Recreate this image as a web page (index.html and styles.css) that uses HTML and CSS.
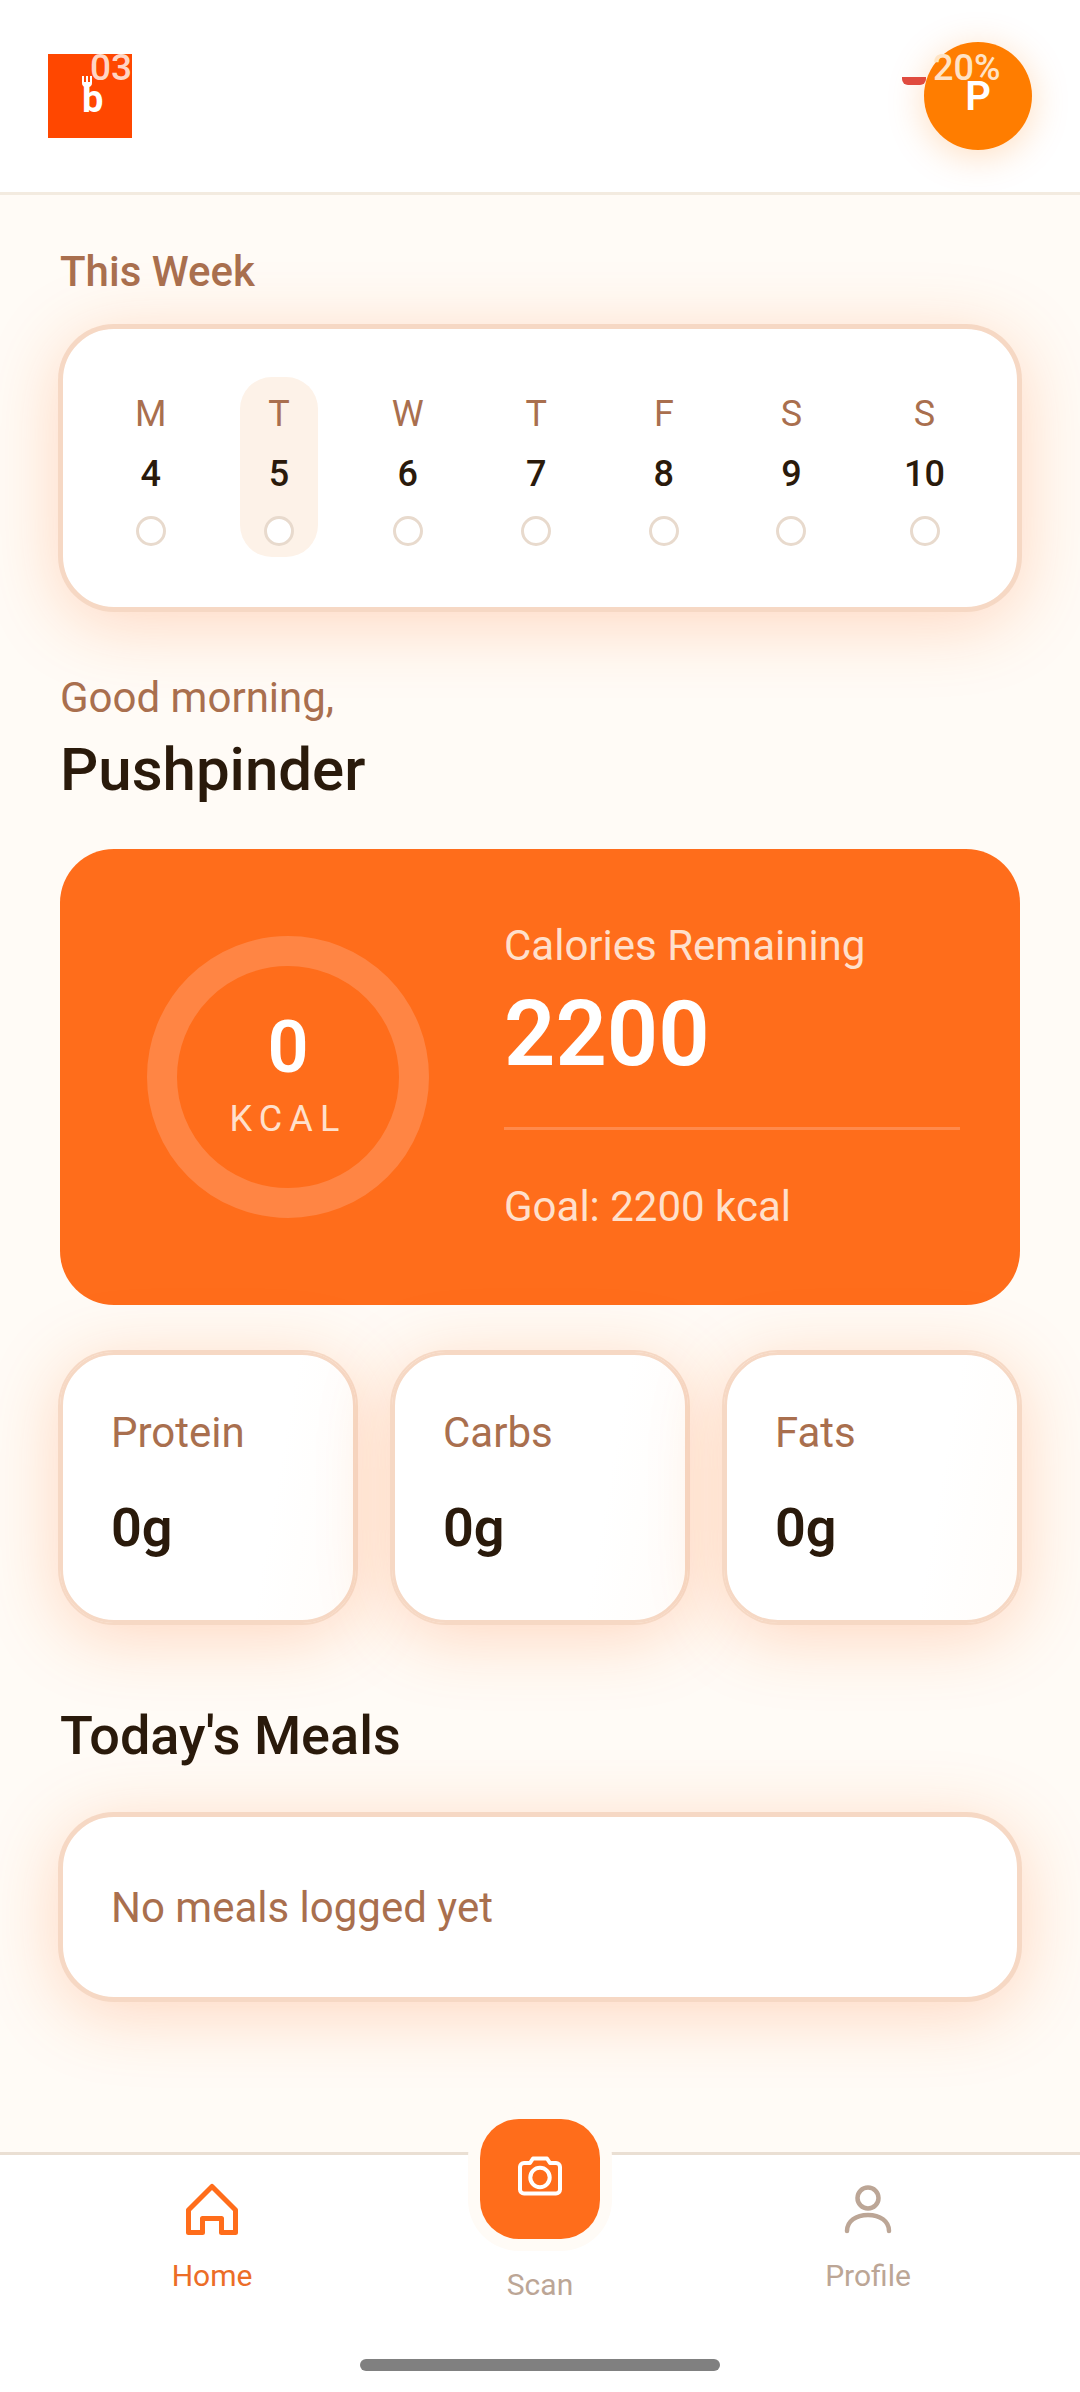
FILE: index.html
```html
<!DOCTYPE html>
<html>
<head>
  <title>Home</title>
  <link rel="stylesheet" href="styles.css">
</head>
<body>
  <header class="top-bar">
    <div class="logo">
      <span class="logo-letter">b</span>
      <svg class="logo-fork" viewBox="0 0 10 16"><path d="M0 0h2v6h2V0h2v6h2V0h2v7q0 3-3 4v5H3v-5q-3-1-3-4z" fill="#fff"/></svg>
      <span class="logo-count">03</span>
    </div>
    <div class="avatar-wrap">
      <span class="sale-dash"></span>
      <div class="avatar">P</div>
      <span class="sale-text">20%</span>
    </div>
  </header>

  <main class="content">
    <h2 class="week-title">This Week</h2>
    <section class="card week-card">
      <div class="day"><span class="day-name">M</span><span class="day-num">4</span><span class="day-dot"></span></div>
      <div class="day today"><span class="day-name">T</span><span class="day-num">5</span><span class="day-dot"></span></div>
      <div class="day"><span class="day-name">W</span><span class="day-num">6</span><span class="day-dot"></span></div>
      <div class="day"><span class="day-name">T</span><span class="day-num">7</span><span class="day-dot"></span></div>
      <div class="day"><span class="day-name">F</span><span class="day-num">8</span><span class="day-dot"></span></div>
      <div class="day"><span class="day-name">S</span><span class="day-num">9</span><span class="day-dot"></span></div>
      <div class="day"><span class="day-name">S</span><span class="day-num">10</span><span class="day-dot"></span></div>
    </section>

    <p class="greeting">Good morning,</p>
    <h1 class="user-name">Pushpinder</h1>

    <section class="calorie-card">
      <div class="ring-col">
        <div class="ring">
          <span class="ring-value">0</span>
          <span class="ring-unit">KCAL</span>
        </div>
      </div>
      <div class="calorie-info">
        <span class="calorie-label">Calories Remaining</span>
        <span class="calorie-value">2200</span>
        <div class="calorie-line"></div>
        <span class="calorie-goal">Goal: 2200 kcal</span>
      </div>
    </section>

    <section class="macros">
      <div class="card macro"><span class="macro-label">Protein</span><span class="macro-value">0g</span></div>
      <div class="card macro"><span class="macro-label">Carbs</span><span class="macro-value">0g</span></div>
      <div class="card macro"><span class="macro-label">Fats</span><span class="macro-value">0g</span></div>
    </section>

    <h2 class="meals-title">Today's Meals</h2>
    <section class="card meals-card">No meals logged yet</section>
  </main>

  <nav class="bottom-nav">
    <div class="nav-item active">
      <svg class="nav-icon" viewBox="0 0 60 60" fill="none" stroke="#ff6d1b" stroke-width="5" stroke-linejoin="round"><path d="M30 7.500 6.500 31v22.500h14v-14h19v14h14V31z"/></svg>
      <span>Home</span>
    </div>
    <div class="nav-item scan">
      <div class="scan-btn">
        <svg class="scan-icon" viewBox="0 0 48 48" fill="none" stroke="#fff" stroke-width="4" stroke-linejoin="round"><path d="M14 11l3-4.500h14l3 4.500h6a4 4 0 0 1 4 4v22.500a4 4 0 0 1-4 4H8a4 4 0 0 1-4-4V15a4 4 0 0 1 4-4z"/><circle cx="24" cy="25.500" r="9.700"/></svg>
      </div>
      <span>Scan</span>
    </div>
    <div class="nav-item">
      <svg class="nav-icon" viewBox="0 0 60 60" fill="none" stroke="#bca696" stroke-width="4.500" stroke-linecap="round"><circle cx="30" cy="19" r="10.500"/><path d="M9 52c0-10 9-16 21-16s21 6 21 16"/></svg>
      <span>Profile</span>
    </div>
    <div class="home-bar"></div>
  </nav>
</body>
</html>
```

FILE: styles.css
```css
* {
  box-sizing: border-box;
}
body {
  display: flex;
  flex-direction: column;
  width: 1080px;
  height: 2392px;
  margin: 0;
  overflow: hidden;
  background-color: #fffbf6;
  color: #2a1a0b;
  font-family: Roboto, "Noto Sans", sans-serif;
}
h1, h2, p {
  margin: 0;
}

/* top bar */
.top-bar {
  display: flex;
  justify-content: space-between;
  align-items: center;
  height: 195px;
  padding: 0 48px;
  background-color: #fff;
  border-bottom: 3px solid #f3ebe0;
  flex-shrink: 0;
}
.logo {
  position: relative;
  width: 84px;
  height: 84px;
  background-color: #ff4700;
}
.logo-fork {
  position: absolute;
  left: 34px;
  top: 22px;
  width: 10px;
  height: 16px;
}
.logo-letter {
  position: absolute;
  left: 34px;
  top: 26px;
  color: #fff;
  font-size: 38px;
  font-weight: 700;
  line-height: 38px;
}
.logo-count {
  position: absolute;
  right: 0;
  top: -5px;
  color: #ffd5c4;
  font-size: 37px;
  font-weight: 500;
  line-height: 37px;
}
.avatar-wrap {
  position: relative;
  width: 108px;
  height: 108px;
}
.avatar {
  display: flex;
  justify-content: center;
  align-items: center;
  width: 108px;
  height: 108px;
  border-radius: 50%;
  background-color: #ff7d00;
  color: #fff;
  font-size: 40px;
  font-weight: 600;
  box-shadow: 0 6px 36px rgba(255, 125, 0, 0.25);
}
.sale-dash {
  position: absolute;
  left: -22px;
  top: 35px;
  width: 24px;
  height: 8px;
  background-color: #e04b3f;
  border-radius: 0 0 6px 6px;
}
.sale-text {
  position: absolute;
  left: 9px;
  top: 8px;
  color: #ffe3c6;
  font-size: 36px;
  font-weight: 500;
  line-height: 36px;
}

/* content */
.content {
  flex-grow: 1;
  padding: 0 60px;
}
.card {
  background-color: #fff;
  border: 3px solid #f6d8c4;
  box-shadow: 0 0 0 2px #f6d8c4, 0 12px 72px rgba(255, 109, 27, 0.26);
}
.week-title {
  margin-top: 53px;
  color: #a96f4e;
  font-size: 42px;
  font-weight: 500;
  line-height: 48px;
}
.week-card {
  display: flex;
  justify-content: space-between;
  height: 284px;
  margin-top: 30px;
  padding: 48px 48px 0;
  border-radius: 54px;
}
.day {
  display: flex;
  flex-direction: column;
  align-items: center;
  height: 180px;
  padding: 0 24px;
  border-radius: 32px;
}
.day.today {
  background-color: #fdf2e8;
}
.day-name {
  margin-top: 16px;
  color: #a96f4e;
  font-size: 36px;
  line-height: 42px;
}
.day-num {
  margin-top: 18px;
  font-size: 36px;
  font-weight: 500;
  line-height: 42px;
}
.day-dot {
  width: 30px;
  height: 30px;
  margin-top: 21px;
  border: 3px solid #e8dacd;
  border-radius: 50%;
  background-color: #fff;
}
.greeting {
  margin-top: 63px;
  color: #a96f4e;
  font-size: 42px;
  line-height: 50px;
}
.user-name {
  margin-top: 12px;
  font-size: 60px;
  font-weight: 500;
  line-height: 70px;
}

/* calorie card */
.calorie-card {
  display: flex;
  height: 456px;
  margin-top: 44px;
  border-radius: 54px;
  background-color: #ff6d1b;
  color: #fff;
}
.ring-col {
  display: flex;
  align-items: center;
  width: 444px;
  padding-left: 87px;
  flex-shrink: 0;
}
.ring {
  display: flex;
  flex-direction: column;
  align-items: center;
  justify-content: center;
  width: 282px;
  height: 282px;
  padding-bottom: 8px;
  border: 30px solid #ff8544;
  border-radius: 50%;
}
.ring-value {
  font-size: 72px;
  font-weight: 600;
  line-height: 84px;
}
.ring-unit {
  margin-top: 8px;
  color: #ffe0cc;
  font-size: 36px;
  letter-spacing: 7.200px;
  line-height: 42px;
}
.calorie-info {
  display: flex;
  flex-direction: column;
  flex-grow: 1;
  padding: 72px 60px 0 0;
}
.calorie-label {
  color: #ffe0cc;
  font-size: 42px;
  line-height: 50px;
}
.calorie-value {
  margin-top: 11px;
  font-size: 90px;
  font-weight: 600;
  line-height: 106px;
}
.calorie-line {
  height: 3px;
  margin-top: 39px;
  background-color: #ff8a4c;
}
.calorie-goal {
  margin-top: 52px;
  color: #ffe0cc;
  font-size: 42px;
  line-height: 50px;
}

/* macros */
.macros {
  display: flex;
  gap: 36px;
  margin-top: 47px;
}
.macro {
  display: flex;
  flex-direction: column;
  flex: 1;
  height: 271px;
  padding: 53px 48px 0;
  border-radius: 54px;
  background: linear-gradient(100deg, #fff 70%, #fffcf9);
}
.macro-label {
  color: #a96f4e;
  font-size: 42px;
  line-height: 50px;
}
.macro-value {
  margin-top: 38px;
  font-size: 54px;
  font-weight: 600;
  line-height: 64px;
}
.meals-title {
  margin-top: 81px;
  font-size: 54px;
  font-weight: 500;
  line-height: 64px;
}
.meals-card {
  display: flex;
  align-items: center;
  height: 186px;
  margin-top: 46px;
  padding: 0 48px;
  border-radius: 54px;
  color: #a96f4e;
  font-size: 42px;
}

/* bottom nav */
.bottom-nav {
  position: relative;
  display: flex;
  height: 240px;
  padding: 0 48px;
  background-color: #fff;
  border-top: 3px solid #eadfd3;
  flex-shrink: 0;
}
.nav-item {
  display: flex;
  flex-direction: column;
  align-items: center;
  flex: 1;
  padding-top: 24px;
  color: #bca696;
  font-size: 30px;
  line-height: 36px;
}
.nav-item.active {
  color: #ec6d27;
}
.nav-icon {
  width: 60px;
  height: 60px;
  margin-bottom: 19px;
}
.nav-item.scan {
  padding-top: 0;
}
.scan-btn {
  display: flex;
  justify-content: center;
  align-items: center;
  width: 120px;
  height: 120px;
  margin-top: -36px;
  margin-bottom: 28px;
  border-radius: 39px;
  background-color: #ff6d1b;
  box-shadow: 0 0 0 12px #fffbf6;
}
.scan-icon {
  width: 48px;
  height: 48px;
  margin-bottom: 7px;
}
.home-bar {
  position: absolute;
  left: 360px;
  bottom: 21px;
  width: 360px;
  height: 12px;
  border-radius: 6px;
  background-color: #808080;
}
```
